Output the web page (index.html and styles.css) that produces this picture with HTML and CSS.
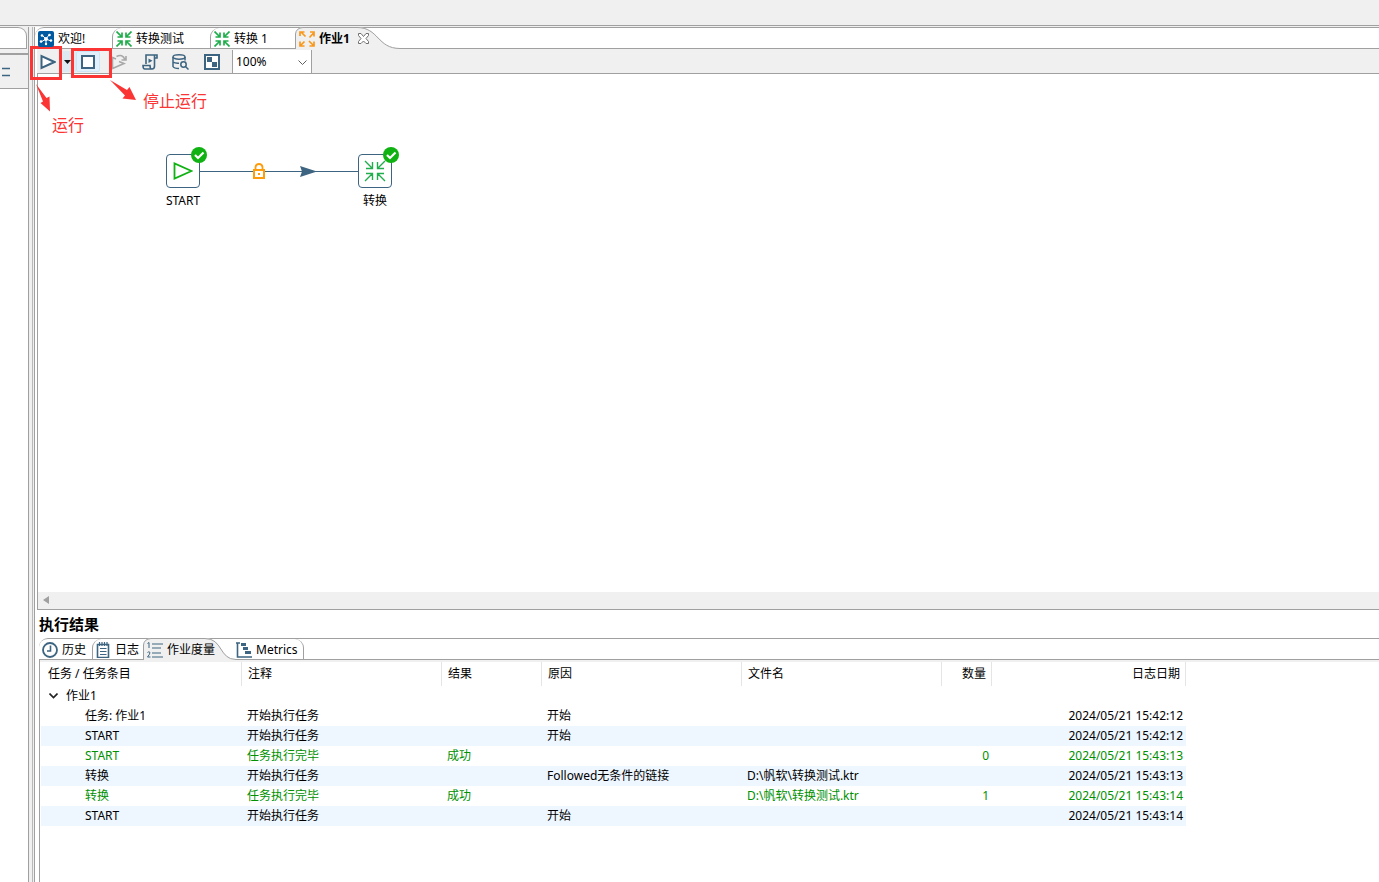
FILE: index.html
```html
<!DOCTYPE html>
<html lang="zh-CN">
<head>
<meta charset="utf-8">
<title>作业1</title>
<link rel="stylesheet" href="styles.css">
</head>
<body>
<svg class="defs" aria-hidden="true">
  <defs>
    <symbol id="arrows-in" viewBox="0 0 16 16">
      <path d="M.5.5L6 6M6 1.500V6H1.500M15.500.5L10 6M10 1.500V6h4.500M.5 15.500L6 10M1.500 10H6v4.500M15.500 15.500L10 10M14.500 10H10v4.500" fill="none" stroke="currentColor" stroke-width="1.700"/>
    </symbol>
    <symbol id="arrows-out" viewBox="0 0 16 16">
      <path d="M6.500 5.500L2 1M1 5V1h4.500M10.500 6.500L15 1.500M11 1h4v4.500M5.500 10.500L1 15M1 10.500V15h4.500M10 10l5 5M10.500 15H15v-4.500" fill="none" stroke="currentColor" stroke-width="1.700"/>
    </symbol>
    <symbol id="check" viewBox="0 0 16 16">
      <circle cx="8" cy="8" r="8" fill="#0fb212"/>
      <path d="M4 8l3 3 5.500-5.500" fill="none" stroke="#fff" stroke-width="2.200"/>
    </symbol>
  </defs>
</svg>
<div class="app">
  <div class="topbar"></div>
  <div class="workspace">
    <aside class="side">
      <div class="side-tab"></div>
      <div class="side-tools">
        <svg width="10" height="10" viewBox="0 0 10 10"><path d="M2 1.500h8M2 8.500h8" stroke="#3d6480" stroke-width="1.500"/></svg>
      </div>
      <div class="side-body"></div>
    </aside>
    <div class="sash"></div>
    <main class="editor">
      <nav class="tabs">
        <button class="tab tab-welcome">
          <svg width="16" height="16" viewBox="0 0 16 16"><rect width="16" height="16" rx="2" fill="#005a9f"/><path d="M8 8L4 4M8 8l3-4M8 8l5 2M8 8l-5 3M8 8v5" stroke="#fff"/><circle cx="8" cy="8" r="2" fill="#fff"/><g fill="#fff"><circle cx="4" cy="4.500" r="1.300"/><circle cx="11.500" cy="4" r="1.300"/><circle cx="13" cy="9.500" r="1.200"/><circle cx="3" cy="10.500" r="1.300"/><circle cx="8" cy="13" r="1.200"/></g></svg>
          <span>欢迎!</span>
        </button>
        <button class="tab tab-test"><svg class="green" width="16" height="16"><use href="#arrows-in"/></svg><span>转换测试</span></button>
        <button class="tab tab-trans"><svg class="green" width="16" height="16"><use href="#arrows-in"/></svg><span>转换 1</span></button>
        <button class="tab tab-job active">
          <svg class="tab-shape" width="106" height="22" viewBox="0 0 106 22"><path d="M0 22V7Q1 1 8 0H62C84 0 82 21 105 21V22z" fill="#f0f0f0"/><path d="M.5 22V7Q1 1 8 .5H62C84 .5 82 21.500 105 21.500" fill="none" stroke="#a0a0a0"/></svg>
          <svg class="orange" width="16" height="16"><use href="#arrows-out"/></svg><span>作业1</span>
          <svg class="close" width="11" height="11" viewBox="0 0 11 11"><path d="M.5.5h2.500l2.500 3L8 .5h2.500v2L8 5.500l2.500 3v2H8L5.500 8 3 10.500H.5v-2L3 5.500.5 2.500z" fill="#fff" stroke="#707070"/></svg>
        </button>
      </nav>
      <div class="toolbar">
        <button class="tool run" aria-label="运行"><svg width="16" height="16" viewBox="0 0 16 16"><path d="M1.500 2v12L14.500 8z" fill="#fff" stroke="#3d6480" stroke-width="2"/></svg></button>
        <button class="tool drop" aria-label="运行选项"><svg width="7" height="4" viewBox="0 0 7 4"><path d="M0 0h7L3.500 4z" fill="#111"/></svg></button>
        <button class="tool stop" aria-label="停止运行"><svg width="14" height="14" viewBox="0 0 14 14"><path d="M1 1h12v12H1z" fill="#fff" stroke="#3d6480" stroke-width="2"/></svg></button>
        <div class="tool-group">
          <button class="tool wide" aria-label="重放"><svg width="16" height="16" viewBox="0 0 16 16"><g fill="none" stroke="#a8a8a8" stroke-width="1.600"><path d="M1.500 7v7.500L13 9.500 8 7.500M1.500 7V3.500L5 5"/><path d="M5.500 2.500q6-3 8.500 3M15 2v4h-4.500"/></g></svg></button>
          <button class="tool wide" aria-label="脚本"><svg width="16" height="16" viewBox="0 0 16 16"><g fill="none" stroke="#3d6480" stroke-width="1.600"><path d="M4 10V1h11v3h-3M12.500 1v11q0 3-2.500 3H3q-2 0-2-3.500h7q0 3.500 2 3.500"/></g><path d="M6.500 4.500v4.500L10.500 6.800z" fill="#3d6480"/></svg></button>
          <button class="tool wide" aria-label="浏览数据库"><svg width="17" height="16" viewBox="0 0 17 16"><g fill="none" stroke="#3d6480" stroke-width="1.500"><ellipse cx="7" cy="3" rx="6" ry="2.200"/><path d="M1 3v9.500q1 2 6 2M13 3v3.500M1 8q2 1.500 6 1.200"/><circle cx="11.500" cy="10.500" r="2.700"/><path d="M13.500 12.500l3 3"/></g></svg></button>
          <button class="tool wide" aria-label="显示结果"><svg width="16" height="16" viewBox="0 0 16 16"><path d="M1 1h14v14H1z" fill="#fff" stroke="#3d6480" stroke-width="2"/><path d="M3 3h5v5H3zM8 8h5v5H8z" fill="#3d6480"/></svg></button>
        </div>
        <div class="zoom">
          <select aria-label="缩放"><option>100%</option></select>
          <svg width="9" height="6" viewBox="0 0 9 6"><path d="M.5.5l4 4 4-4" fill="none" stroke="#606060"/></svg>
        </div>
      </div>
      <section class="canvas">
        <svg class="hop" width="160" height="20" viewBox="0 0 160 20">
          <path d="M0 10.500h160" stroke="#3d6480"/>
          <path d="M100 5l17 5.500L100 16l2-5.500z" fill="#3d6480"/>
          <path d="M54 9h10v8H54z" fill="#fff" stroke="#ff9c0a" stroke-width="2"/><path d="M55.500 9V6q.5-3 3.500-3t3.500 3v3" fill="#fff" stroke="#ff9c0a" stroke-width="1.800"/><path d="M53 9h12" stroke="#ff9c0a" stroke-width="2"/><path d="M58 12h2v2h-2z" fill="#ff9c0a"/>
        </svg>
        <div class="node node-start">
          <div class="node-box"><svg width="20" height="20" viewBox="0 0 20 20"><path d="M1.500 2.500v15L18.500 10z" fill="none" stroke="#0fb212" stroke-width="1.800"/></svg><svg class="badge" width="16" height="16"><use href="#check"/></svg></div>
          <span>START</span>
        </div>
        <div class="node node-trans">
          <div class="node-box"><svg width="22" height="22" viewBox="0 0 22 22"><path d="M1 1l7 7M8.500 2v6.500H2M21 1l-7 7M13.500 2v6.500H20M1 21l7-7M8.500 20v-6.500H2M21 21l-7-7M13.500 20v-6.500H20" fill="none" stroke="#1fae4b" stroke-width="1.400"/></svg><svg class="badge" width="16" height="16"><use href="#check"/></svg></div>
          <span>转换</span>
        </div>
      </section>
      <div class="scrollbar"><svg width="6" height="8" viewBox="0 0 6 8"><path d="M6 0v8L0 4z" fill="#a0a0a0"/></svg></div>
      <section class="results">
        <h2>执行结果</h2>
        <nav class="tabs result-tabs">
          <button class="tab tab-history"><svg width="16" height="16" viewBox="0 0 16 16"><circle cx="8" cy="8" r="7" fill="#fff" stroke="#3d6480" stroke-width="1.800"/><path d="M8.500 3.500V9H5" fill="none" stroke="#3d6480" stroke-width="1.600"/></svg><span>历史</span></button>
          <button class="tab tab-log"><svg width="16" height="16" viewBox="0 0 16 16"><path d="M2.500 2.500h11v13h-11z" fill="#fff" stroke="#3d6480" stroke-width="1.600"/><path d="M4.500 0v4M7 0v4M9.500 0v4M12 0v4M5 6.500h6.500M5 9.500h6.500M5 12.500h6.500" stroke="#3d6480" stroke-width="1.200"/></svg><span>日志</span></button>
          <button class="tab tab-metric active">
            <svg class="tab-shape" width="94" height="22" viewBox="0 0 94 22"><path d="M0 22V7Q1 1 8 0H62C80 0 76 21 93 21V22z" fill="#f0f0f0"/><path d="M.5 22V7Q1 1 8 .5H62C80 .5 76 21.500 93 21.500" fill="none" stroke="#a0a0a0"/></svg>
            <svg width="16" height="16" viewBox="0 0 16 16"><path d="M5 2h11M5 6h9M5 11h9M5 15h11" stroke="#3d6480" stroke-width="1.200"/><path d="M.5 1.500L2 .5V6M.5 10.500q1.500-1.500 2.500 0 0 1.500-2.500 4.500h3" fill="none" stroke="#3d6480"/></svg><span>作业度量</span>
          </button>
          <button class="tab tab-metrics"><svg width="16" height="16" viewBox="0 0 16 16"><path d="M0 1h4M1.500 1v14H16" fill="none" stroke="#3d6480" stroke-width="1.600"/><path d="M5 1h5v3H5zM7 5h5v3H7zM9 9h6v3H9z" fill="#3d6480"/></svg><span>Metrics</span></button>
        </nav>
        <div class="grid-wrap">
          <table class="grid">
            <colgroup><col class="c-task"><col class="c-note"><col class="c-result"><col class="c-reason"><col class="c-file"><col class="c-num"><col class="c-date"></colgroup>
            <thead><tr><th>任务 / 任务条目</th><th>注释</th><th>结果</th><th>原因</th><th>文件名</th><th class="num">数量</th><th class="num">日志日期</th></tr></thead>
            <tbody>
              <tr class="root"><td><button class="twisty" aria-label="折叠"><svg width="9" height="6" viewBox="0 0 9 6"><path d="M.5.5l4 4 4-4" fill="none" stroke="#222" stroke-width="1.600"/></svg></button>作业1</td><td></td><td></td><td></td><td></td><td></td><td></td></tr>
              <tr><td>任务: 作业1</td><td>开始执行任务</td><td></td><td>开始</td><td></td><td></td><td class="num">2024/05/21 15:42:12</td></tr>
              <tr><td>START</td><td>开始执行任务</td><td></td><td>开始</td><td></td><td></td><td class="num">2024/05/21 15:42:12</td></tr>
              <tr class="ok"><td>START</td><td>任务执行完毕</td><td>成功</td><td></td><td></td><td class="num">0</td><td class="num">2024/05/21 15:43:13</td></tr>
              <tr><td>转换</td><td>开始执行任务</td><td></td><td>Followed无条件的链接</td><td>D:\帆软\转换测试.ktr</td><td></td><td class="num">2024/05/21 15:43:13</td></tr>
              <tr class="ok"><td>转换</td><td>任务执行完毕</td><td>成功</td><td></td><td>D:\帆软\转换测试.ktr</td><td class="num">1</td><td class="num">2024/05/21 15:43:14</td></tr>
              <tr><td>START</td><td>开始执行任务</td><td></td><td>开始</td><td></td><td></td><td class="num">2024/05/21 15:43:14</td></tr>
            </tbody>
          </table>
        </div>
      </section>
    </main>
  </div>
  <svg class="marks" width="150" height="120" viewBox="0 0 150 120" aria-hidden="true">
    <g fill="none" stroke="#fb3434" stroke-width="3"><path d="M31.500 47.500h29v31h-29zM72.500 49.500h38v27h-38z"/></g>
    <path d="M36 84l10.500 14 3-1.500.5 15-9.500-8.500 2.500-1.500zM110 80l17 10 2.500-3 6.500 13-13.500-1.500 2.500-3z" fill="#fb3434"/>
  </svg>
  <span class="mark-text mark-run">运行</span>
  <span class="mark-text mark-stop">停止运行</span>
</div>
</body>
</html>
```
FILE: styles.css
```css
* { box-sizing: border-box; }
body {
  margin: 0;
  font: 12px/20px "Noto Sans", "Noto Sans CJK SC", sans-serif;
  color: #000;
  background: #fff;
}
button { font: inherit; color: inherit; border: 0; padding: 0; background: none; }
svg { display: block; flex: none; }
.defs { position: absolute; width: 0; height: 0; }
.app { position: relative; display: flex; flex-direction: column; height: 100vh; overflow: hidden; }
.topbar { height: 26px; flex: none; background: #f0f0f0; border-bottom: 1px solid #a0a0a0; }
.workspace { display: flex; flex: 1; min-height: 0; background: #f0f0f0; padding-top: 1px; }

.side { width: 29px; flex: none; display: flex; flex-direction: column; border-right: 1px solid #a0a0a0; }
.side-tab { height: 22px; margin-right: 1px; background: #fff; border: 1px solid #a0a0a0; border-left: 0; border-top-right-radius: 9px; }
.side-tools { height: 36px; margin-top: 4px; padding-top: 12px; border-top: 2px solid #a0a0a0; border-bottom: 1px solid #a0a0a0; }
.side-body { flex: 1; background: #fff; }
.sash { width: 4px; flex: none; margin-right: 1px; border-right: 1px solid #b8b8b8; }

.editor { flex: 1; min-width: 0; display: flex; flex-direction: column; background: #fff; border-left: 1px solid #a0a0a0; }
.tabs { display: flex; height: 22px; flex: none; border-top: 1px solid #a0a0a0; border-bottom: 1px solid #a0a0a0; }
.editor > .tabs { border-top-left-radius: 9px; }
.tab { position: relative; display: flex; align-items: center; gap: 4px; height: 20px; padding: 1px 0 0 3px; border-left: 1px solid #a0a0a0; border-top-left-radius: 9px; white-space: nowrap; }
.tab.active { border-left: 0; padding-left: 4px; }
.tab-shape { position: absolute; left: 0; top: -1px; }
.tab > * { z-index: 1; }
.tab > .tab-shape { z-index: 0; }
.tab-welcome { width: 77px; border-left: 0; }
.tab-test { width: 98px; }
.tab-trans { width: 85px; }
.tab-job { width: 106px; font-weight: 700; }
.close { margin-left: 4px; }
.green { color: #1fae4b; }
.orange { color: #f7981d; }

.toolbar { display: flex; align-items: center; height: 25px; flex: none; margin-left: 2px; padding-top: 1px; background: #f0f0f0; border-bottom: 1px solid #a0a0a0; }
.tool { display: flex; align-items: center; justify-content: center; height: 21px; }
.run { width: 22px; }
.drop { width: 17px; background: #dfe9f1; }
.stop { width: 24px; background: #e2f0fb; border: 1px solid #cce6f8; border-radius: 2px; }
.tool-group { display: flex; padding: 0 5px 0 3px; }
.wide { width: 31px; }
.zoom { position: relative; width: 80px; height: 23px; background: #fff; border: 1px solid #a0a0a0; border-width: 0 1px; }
.zoom select { width: 100%; height: 100%; padding: 0 3px; border: 0; background: none; font: inherit; color: inherit; appearance: none; }
.zoom svg { position: absolute; right: 4px; top: 10px; pointer-events: none; }

.canvas { position: relative; flex: 1; min-height: 140px; margin-left: 2px; border-left: 1px solid #a0a0a0; }
.hop { position: absolute; left: 162px; top: 87px; }
.node { position: absolute; top: 80px; width: 50px; display: flex; flex-direction: column; align-items: center; gap: 3px; }
.node-start { left: 120px; }
.node-trans { left: 312px; }
.node-box { position: relative; width: 34px; height: 34px; display: flex; align-items: center; justify-content: center; background: #fff; border: 1px solid #3d6480; border-radius: 4px; }
.badge { position: absolute; right: -8px; top: -8px; }
.scrollbar { display: flex; align-items: center; height: 18px; flex: none; margin-left: 2px; padding: 0 0 1px 5px; background: #f0f0f0; border-left: 1px solid #a0a0a0; border-bottom: 1px solid #a0a0a0; }

.results { flex: none; height: 272px; padding-left: 4px; display: flex; flex-direction: column; }
h2 { margin: 0; height: 28px; font-size: 15px; line-height: 28px; }
.result-tabs { border-top-left-radius: 9px; }
.result-tabs .tab-history { width: 53px; border-left: 0; }
.result-tabs .tab-log { width: 51px; padding-left: 2px; }
.tab-metric { width: 93px; }
.result-tabs .tab-metrics { width: 68px; padding-left: 0; border-left: 0; border-right: 1px solid #a0a0a0; border-radius: 0 9px 0 0; }
.grid-wrap { flex: 1; border: 1px solid #a0a0a0; border-width: 0 0 0 1px; padding: 2px 0 0 1px; background: linear-gradient(#f0f0f0 2px, #fff 2px); }
.grid { width: 1145px; table-layout: fixed; border-collapse: separate; border-spacing: 0; }
.c-task { width: 201px; }
.c-note, .c-reason, .c-file { width: 200px; }
.c-result { width: 100px; }
.c-num { width: 50px; }
th, td { padding: 0 0 0 5px; text-align: left; font-weight: 400; white-space: nowrap; }
th { height: 24px; padding: 0 5px 0 6px; line-height: 24px; border-right: 1px solid #e5e5e5; }
th:first-child { padding-left: 7px; }
td { height: 20px; }
td:first-child { padding-left: 44px; }
.root td:first-child { padding-left: 8px; }
th.num, td.num { text-align: right; }
td.num { padding-right: 3px; }
tbody tr:nth-child(odd):not(.root) td { background: #eef7ff; }
.ok { color: #009000; }
.twisty { width: 17px; height: 20px; vertical-align: top; }

.marks { position: absolute; left: 0; top: 0; pointer-events: none; }
.mark-text { position: absolute; font-size: 16px; line-height: 24px; color: #fb3434; }
.mark-run { left: 52px; top: 113px; }
.mark-stop { left: 143px; top: 89px; }
```
